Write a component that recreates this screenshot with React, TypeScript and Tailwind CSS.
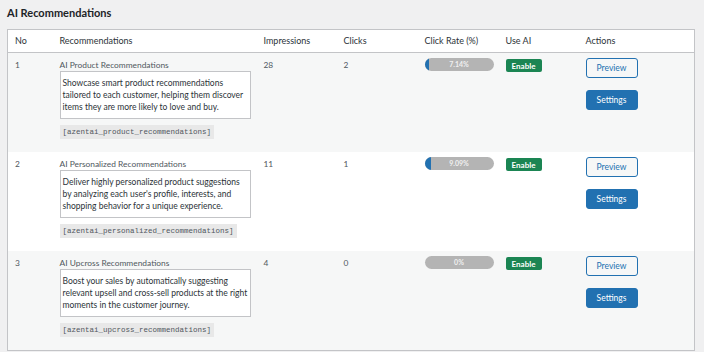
import * as React from "react";

type Rec = {
  no: number;
  title: string;
  desc: string;
  shortcode: string;
  impressions: number;
  clicks: number;
  rate: number;
  label: string;
};

const RECS: Rec[] = [
  {
    no: 1,
    title: "AI Product Recommendations",
    desc: "Showcase smart product recommendations tailored to each customer, helping them discover items they are more likely to love and buy.",
    shortcode: "[azentai_product_recommendations]",
    impressions: 28,
    clicks: 2,
    rate: 7.14,
    label: "7.14%",
  },
  {
    no: 2,
    title: "AI Personalized Recommendations",
    desc: "Deliver highly personalized product suggestions by analyzing each user's profile, interests, and shopping behavior for a unique experience.",
    shortcode: "[azentai_personalized_recommendations]",
    impressions: 11,
    clicks: 1,
    rate: 9.09,
    label: "9.09%",
  },
  {
    no: 3,
    title: "AI Upcross Recommendations",
    desc: "Boost your sales by automatically suggesting relevant upsell and cross-sell products at the right moments in the customer journey.",
    shortcode: "[azentai_upcross_recommendations]",
    impressions: 4,
    clicks: 0,
    rate: 0,
    label: "0%",
  },
];

function RateBar({ rate, label }: { rate: number; label: string }) {
  return (
    <div className="relative h-[13px] w-[69px] overflow-hidden rounded-full bg-[#b4b4b4]">
      <div className="absolute inset-y-0 left-0 bg-[#2271b1]" style={{ width: `${rate}%` }} />
      <span className="relative flex h-full items-center justify-center text-[7px] font-bold text-[#f0f0f0]">
        {label}
      </span>
    </div>
  );
}

export default function App() {
  return (
    <div
      className="min-h-[352px] bg-[#f0f0f1] px-[7px] pt-[5px] text-[#50575e]"
      style={{ fontFamily: '"Segoe UI", Lato, "Noto Sans", sans-serif' }}
    >
      <h1 className="mb-[8px] text-[11px] leading-[16px] font-bold text-[#1d2327]">AI Recommendations</h1>
      <table className="w-[687px] table-fixed border-collapse border border-[#c3c4c7] text-[8.4px]">
        <colgroup>
          <col className="w-[45px]" />
          <col className="w-[204px]" />
          <col className="w-[80px]" />
          <col className="w-[81px]" />
          <col className="w-[81px]" />
          <col className="w-[80px]" />
          <col className="w-[116px]" />
        </colgroup>
        <thead>
          <tr className="h-[23px] border-b border-[#c3c4c7] bg-white text-left text-[9px] text-[#2c3338]">
            <th className="pl-[7px] font-normal">No</th>
            <th className="pl-[7px] font-normal">Recommendations</th>
            <th className="pl-[7px] font-normal">Impressions</th>
            <th className="pl-[7px] font-normal">Clicks</th>
            <th className="pl-[7px] font-normal">Click Rate (%)</th>
            <th className="pl-[7px] font-normal">Use AI</th>
            <th className="pl-[7px] font-normal">Actions</th>
          </tr>
        </thead>
        <tbody>
          {RECS.map((r, i) => (
            <tr key={r.no} className={i % 2 === 0 ? "bg-[#f6f7f7]" : "bg-white"}>
              <td className="pt-[6px] pl-[7px] align-top leading-[12px] text-[#50575e]">{r.no}</td>
              <td className="pt-[6px] pb-[13px] pl-[7px] align-top">
                <div className="leading-[12px]">{r.title}</div>
                <div className="w-[191px] border border-[#c3c4c7] bg-white px-[2px] pt-[5px] pb-[5px] text-[8.5px] leading-[12px] text-[#2c3338]">
                  {r.desc}
                </div>
                <div className="mt-[6px] inline-block bg-[#e8e8e8] px-[3px] py-[1px] text-[7.5px] leading-[12px] text-[#50575e]" style={{ fontFamily: '"Liberation Mono", monospace' }}>
                  {r.shortcode}
                </div>
              </td>
              <td className="pt-[6px] pl-[7px] align-top leading-[12px]">{r.impressions}</td>
              <td className="pt-[6px] pl-[7px] align-top leading-[12px]">{r.clicks}</td>
              <td className="pt-[5px] pl-[7px] align-top">
                <RateBar rate={r.rate} label={r.label} />
              </td>
              <td className="pt-[6px] pl-[7px] align-top">
                <span className="inline-flex h-[13px] w-[36px] items-center justify-center rounded-[2px] bg-[#1b8553] text-[8px] font-bold text-white">
                  Enable
                </span>
              </td>
              <td className="pt-[5px] pl-[7px] align-top">
                <div className="flex flex-col gap-[12px]">
                  <button className="h-[20px] w-[52px] rounded-[3px] border border-[#2271b1] bg-[#f6f7f7] text-[8.5px] text-[#2271b1]">
                    Preview
                  </button>
                  <button className="h-[20px] w-[52px] rounded-[3px] border border-[#2271b1] bg-[#2271b1] text-[8.5px] text-white">
                    Settings
                  </button>
                </div>
              </td>
            </tr>
          ))}
        </tbody>
      </table>
    </div>
  );
}
